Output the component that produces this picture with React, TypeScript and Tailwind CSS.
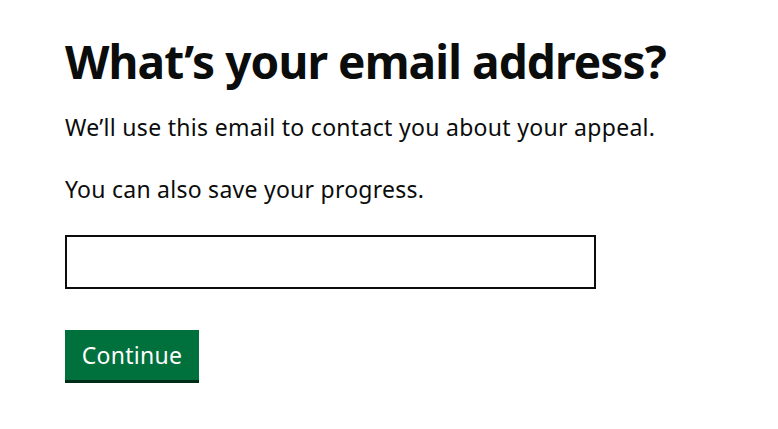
import React from "react";

export default function App() {
  return (
    <div className="min-h-screen bg-white text-[#0b0c0c] pl-[65px] pt-[31px]" style={{ fontFamily: '"Noto Sans", Arial, sans-serif' }}>
      <h1 className="text-[46px] leading-[60px] font-bold tracking-[-0.9px] mb-[21px]">What’s your email address?</h1>
      <p className="text-[23px] leading-[30px] tracking-[0.3px] mb-[32px]">We’ll use this email to contact you about your appeal.</p>
      <p className="text-[23px] leading-[30px] tracking-[0.25px] mb-[31px]">You can also save your progress.</p>
      <input type="email" aria-label="Email address" className="block w-[531px] h-[54px] border-2 border-[#0b0c0c] rounded-none outline-none px-2 text-[23px]" />
      <button className="mt-[41px] flex items-center justify-center bg-[#00703c] text-white text-[23px] leading-[30px] tracking-[0.3px] w-[134px] h-[50px] shadow-[0_3px_0_#002d18]">Continue</button>
    </div>
  );
}
